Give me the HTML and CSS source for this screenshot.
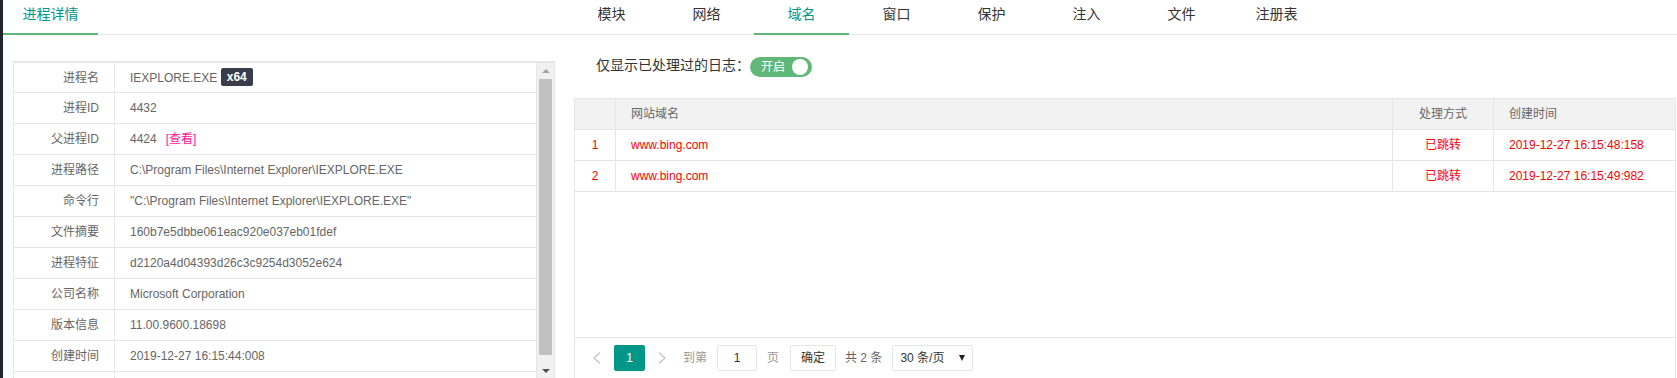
FILE: index.html
```html
<!DOCTYPE html>
<html lang="zh-CN">
<head>
    <meta charset="UTF-8">
    <meta name="viewport" content="width=device-width, initial-scale=1.0">
    <title>进程详情</title>
    <link rel="stylesheet" href="styles.css">
</head>
<body>
<div class="page">
    <div class="side">
        <ul class="tabs">
            <li class="active">进程详情</li>
        </ul>
        <div class="info-box">
            <table class="info">
                <tr><td class="label">进程名</td><td>IEXPLORE.EXE <span class="badge">x64</span></td></tr>
                <tr><td class="label">进程ID</td><td>4432</td></tr>
                <tr><td class="label">父进程ID</td><td>4424<a class="link">[查看]</a></td></tr>
                <tr><td class="label">进程路径</td><td>C:\Program Files\Internet Explorer\IEXPLORE.EXE</td></tr>
                <tr><td class="label">命令行</td><td>"C:\Program Files\Internet Explorer\IEXPLORE.EXE"</td></tr>
                <tr><td class="label">文件摘要</td><td>160b7e5dbbe061eac920e037eb01fdef</td></tr>
                <tr><td class="label">进程特征</td><td>d2120a4d04393d26c3c9254d3052e624</td></tr>
                <tr><td class="label">公司名称</td><td>Microsoft Corporation</td></tr>
                <tr><td class="label">版本信息</td><td>11.00.9600.18698</td></tr>
                <tr><td class="label">创建时间</td><td>2019-12-27 16:15:44:008</td></tr>
                <tr><td class="label"></td><td></td></tr>
            </table>
            <div class="scrollbar">
                <div class="scroll-btn"><span class="arrow-up"></span></div>
                <div class="thumb"></div>
                <div class="scroll-btn bottom"><span class="arrow-down"></span></div>
            </div>
        </div>
    </div>

    <div class="main">
        <ul class="tabs">
            <li>模块</li>
            <li>网络</li>
            <li class="active">域名</li>
            <li>窗口</li>
            <li>保护</li>
            <li>注入</li>
            <li>文件</li>
            <li>注册表</li>
        </ul>

        <div class="filter">
            <span class="filter-label">仅显示已处理过的日志：</span>
            <span class="switch"><em>开启</em><i></i></span>
        </div>

        <div class="grid">
            <table class="log">
                <tr class="head">
                    <th class="col-no"></th>
                    <th class="col-site">网站域名</th>
                    <th class="col-way center">处理方式</th>
                    <th>创建时间</th>
                </tr>
                <tr>
                    <td class="center">1</td>
                    <td>www.bing.com</td>
                    <td class="center">已跳转</td>
                    <td>2019-12-27 16:15:48:158</td>
                </tr>
                <tr>
                    <td class="center">2</td>
                    <td>www.bing.com</td>
                    <td class="center">已跳转</td>
                    <td>2019-12-27 16:15:49:982</td>
                </tr>
            </table>
            <div class="grid-fill"></div>
            <div class="pager">
                <span class="pg-prev">
                    <svg width="9" height="12" viewBox="0 0 9 12"><polyline points="8,0.5 2,6 8,11.5" fill="none" stroke="#c2c2c2" stroke-width="1.2"/></svg>
                </span>
                <span class="pg-curr">1</span>
                <span class="pg-next">
                    <svg width="9" height="12" viewBox="0 0 9 12"><polyline points="1,0.5 7,6 1,11.5" fill="none" stroke="#c2c2c2" stroke-width="1.2"/></svg>
                </span>
                <span class="pg-text">到第</span>
                <span class="pg-input">1</span>
                <span class="pg-text pg-gap">页</span>
                <span class="pg-btn">确定</span>
                <span class="pg-count">共 2 条</span>
                <span class="pg-limit">30 条/页<b class="caret"></b></span>
            </div>
        </div>
    </div>
</div>
</body>
</html>
```

FILE: styles.css
```css
html, body {
    height: 100%;
    overflow: hidden;
}
body {
    margin: 0;
    font-family: 'Liberation Sans', 'Noto Sans CJK SC', sans-serif;
    font-size: 12px;
    color: #666;
    background: #fff;
}
.page {
    display: flex;
    height: 100%;
    border-left: 3px solid #23262e;
}
.side {
    width: 561px;
    flex-shrink: 0;
}
.main {
    flex: 1;
}

/* tabs */
.tabs {
    display: flex;
    margin: 0;
    padding: 0;
    list-style: none;
    height: 35px;
    box-sizing: border-box;
    border-bottom: 1px solid #e6e6e6;
}
.tabs li {
    position: relative;
    width: 95px;
    height: 34px;
    line-height: 28px;
    text-align: center;
    font-size: 14px;
    color: #333;
    cursor: pointer;
}
.tabs li.active {
    color: #009688;
}
.tabs li.active::after {
    content: "";
    position: absolute;
    left: 0;
    right: 0;
    bottom: -1px;
    height: 2px;
    background: #5fb878;
}

/* process info */
.info-box {
    display: flex;
    margin: 26px 9px 0 10px;
    height: 330px;
    overflow: hidden;
    border: 1px solid #e6e6e6;
    border-top-width: 2px;
}
.info {
    width: 523px;
    border-spacing: 0;
    table-layout: fixed;
    align-self: flex-start;
}
.info td {
    height: 31px;
    box-sizing: border-box;
    padding: 0 15px;
    line-height: 20px;
    border-right: 1px solid #e6e6e6;
    border-bottom: 1px solid #e6e6e6;
    white-space: nowrap;
}
.info tr:first-child td {
    height: 30px;
}
.info td.label {
    width: 101px;
    text-align: right;
}
.badge {
    display: inline-block;
    height: 18px;
    line-height: 18px;
    padding: 0 6px;
    border-radius: 2px;
    background: #393d49;
    color: #fff;
    font-weight: bold;
    vertical-align: middle;
    margin-top: -2px;
}
.link {
    margin-left: 9px;
    color: #ff1493;
    cursor: pointer;
}
.scrollbar {
    width: 17px;
    flex-shrink: 0;
    height: 316px;
    background: #f1f1f1;
    display: flex;
    flex-direction: column;
    align-items: center;
}
.scroll-btn {
    height: 16px;
    width: 17px;
    display: flex;
    justify-content: center;
    align-items: center;
}
.scroll-btn.bottom {
    margin-top: auto;
}
.arrow-up {
    border-left: 4px solid transparent;
    border-right: 4px solid transparent;
    border-bottom: 4px solid #a3a3a3;
}
.arrow-down {
    border-left: 4px solid transparent;
    border-right: 4px solid transparent;
    border-top: 4px solid #505050;
}
.thumb {
    width: 13px;
    height: 276px;
    background: #c1c1c1;
}

/* filter */
.filter {
    display: flex;
    align-items: flex-start;
    margin: 22px 0 0 32px;
    height: 20px;
}
.filter-label {
    font-size: 14px;
    line-height: 16px;
    color: #333;
}
.switch {
    position: relative;
    display: inline-block;
    width: 62px;
    height: 20px;
    box-sizing: border-box;
    border-radius: 10px;
    background: #5fb878;
    padding-left: 11px;
    cursor: pointer;
}
.switch em {
    font-style: normal;
    color: #fff;
    font-size: 12px;
    line-height: 20px;
}
.switch i {
    position: absolute;
    right: 4px;
    top: 2px;
    width: 16px;
    height: 16px;
    border-radius: 50%;
    background: #fff;
}

/* log grid */
.grid {
    display: flex;
    flex-direction: column;
    margin: 21px 1px 0 10px;
    height: 281px;
    box-sizing: border-box;
    border: 1px solid #e6e6e6;
}
.log {
    width: 100%;
    border-spacing: 0;
    table-layout: fixed;
}
.log th,
.log td {
    height: 31px;
    box-sizing: border-box;
    padding: 0 15px;
    line-height: 20px;
    text-align: left;
    font-weight: normal;
    border-right: 1px solid #e6e6e6;
    border-bottom: 1px solid #e6e6e6;
    white-space: nowrap;
}
.log th:last-child,
.log td:last-child {
    border-right: none;
}
.log .head th {
    height: 31px;
    background: #f2f2f2;
    color: #666;
}
.log td {
    color: #f00;
}
.log .center {
    text-align: center;
    padding: 0;
}
.col-no {
    width: 41px;
}
.col-site {
    width: 777px;
}
.col-way {
    width: 101px;
}
.grid-fill {
    flex: 1;
}

/* pager */
.pager {
    display: flex;
    align-items: flex-start;
    height: 41px;
    box-sizing: border-box;
    padding: 7px 7px 0;
    border-top: 1px solid #e6e6e6;
    white-space: nowrap;
}
.pager > span {
    height: 26px;
    line-height: 26px;
}
.pg-prev,
.pg-next {
    width: 30px;
    display: flex;
    justify-content: center;
    align-items: center;
}
.pg-prev {
    width: 28px;
}
.pg-curr {
    margin-left: 4px;
    width: 31px;
    text-align: center;
    border-radius: 2px;
    background: #009688;
    color: #fff;
}
.pg-next {
    margin-left: 2px;
}
.pg-text {
    margin-left: 6px;
    color: #999;
}
.pg-input,
.pg-btn,
.pg-limit {
    box-sizing: border-box;
    border: 1px solid #e6e6e6;
    border-radius: 2px;
    color: #333;
}
.pager > .pg-input,
.pager > .pg-btn,
.pager > .pg-limit {
    line-height: 24px;
}
.pg-input {
    margin-left: 10px;
    width: 40px;
    text-align: center;
}
.pg-gap {
    margin-left: 10px;
}
.pg-btn {
    margin-left: 11px;
    width: 46px;
    text-align: center;
}
.pg-count {
    margin-left: 9px;
    color: #666;
}
.pg-limit {
    margin-left: 10px;
    width: 81px;
    padding-left: 7px;
    display: flex;
    align-items: center;
}
.caret {
    margin-left: auto;
    margin-right: 7px;
    border-left: 3px solid transparent;
    border-right: 3px solid transparent;
    border-top: 6px solid #222;
}
```
